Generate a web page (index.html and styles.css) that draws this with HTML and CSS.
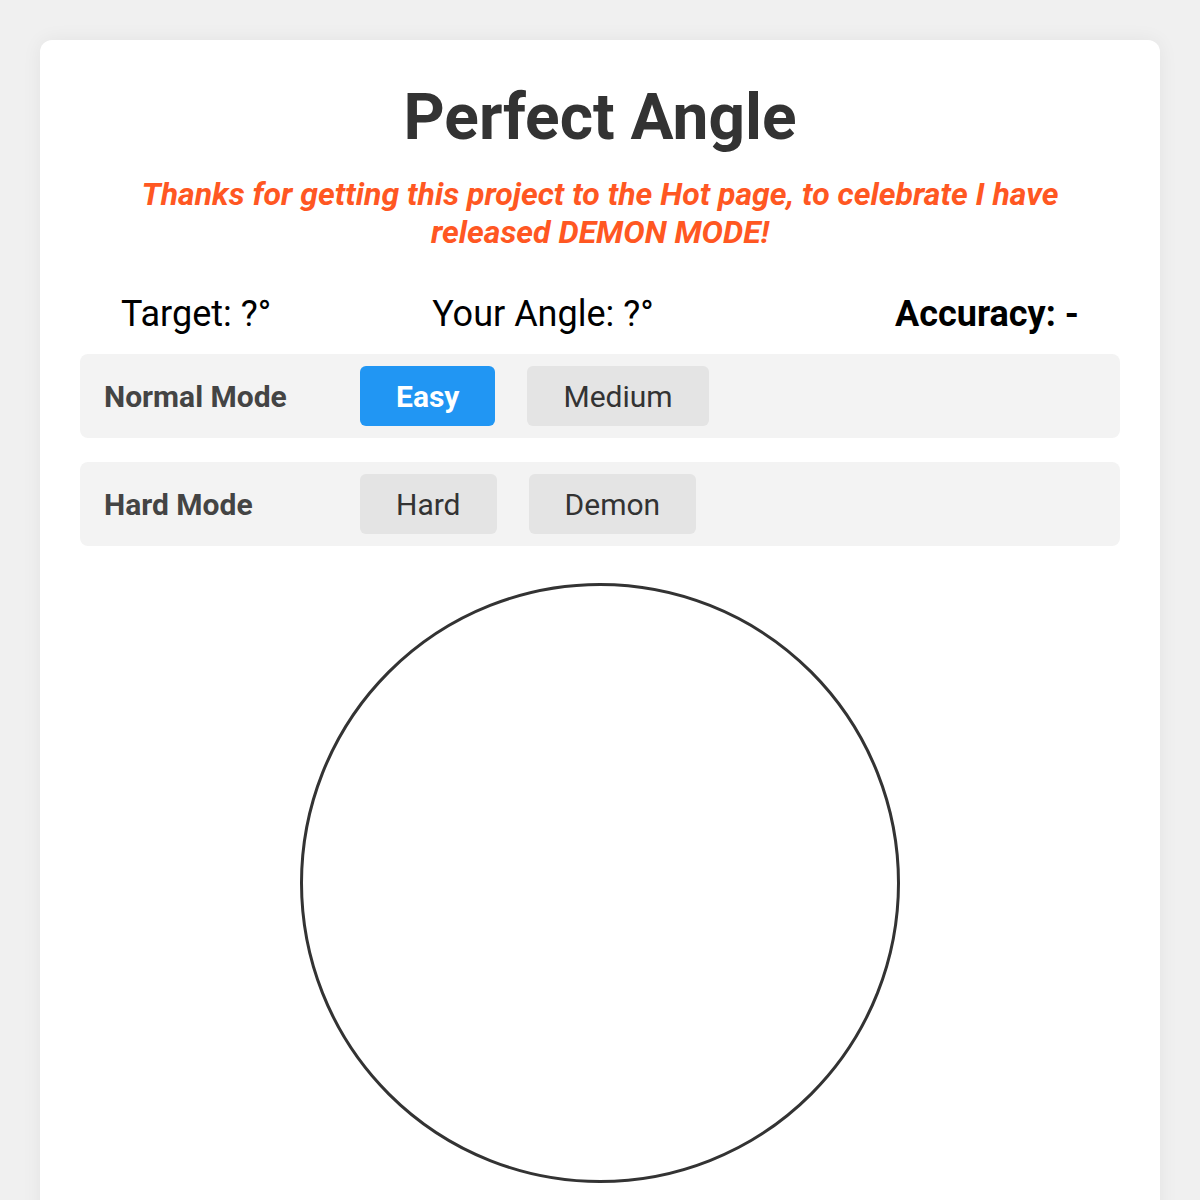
FILE: index.html
```html
<!doctype html>
<html>
<head>
<meta charset="utf-8">
<meta name="viewport" content="width=device-width">
<title>Perfect Angle</title>
<link rel="stylesheet" href="styles.css">
</head>
<body>

<div id="wrap">

<h1>Perfect Angle</h1>
<p class="notice">Thanks for getting this project to the Hot page, to celebrate I have released DEMON MODE!</p>

<div class="stats">
<div class="stat target">Target: <span id="target">?</span>°</div>
<div class="stat yours">Your Angle: <span id="angle">?</span>°</div>
<div class="stat accuracy">Accuracy: <span id="accuracy">-</span></div>
</div>

<div class="modes">
<span class="modelabel">Normal Mode</span>
<button class="mode active">Easy</button>
<button class="mode">Medium</button>
</div>

<div class="modes">
<span class="modelabel">Hard Mode</span>
<button class="mode">Hard</button>
<button class="mode">Demon</button>
</div>

<div class="dial"></div>

</div>

</body>
</html>
```

FILE: styles.css
```css
html, body {margin: 0; padding: 0;}
body {font-family: Roboto, "Liberation Sans", Arial, sans-serif; background-color: #f0f0f0; color: #333;}
#wrap {margin: 40px; padding: 40px; background-color: #fff; border-radius: 12px; box-shadow: 0 0 20px rgba(0,0,0,0.06); min-height: 1200px;}
h1 {font-size: 64px; font-weight: bold; text-align: center; margin: 0; line-height: 75px; color: #333;}
.notice {max-width: 960px; font-size: 32px; font-weight: bold; font-style: italic; color: #ff5722; text-align: center; margin: 20px auto 0; line-height: 38px;}
.stats {display: flex; align-items: center; padding: 0 41px; margin: 42px 0 19px; font-size: 36px; line-height: 42px; color: #000;}
.target {margin-right: 161px;}
.yours {margin-right: auto;}
.accuracy {font-weight: bold;}
.modes {display: flex; align-items: center; gap: 32px; background-color: #f3f3f3; border-radius: 8px; padding: 12px 24px; margin-bottom: 24px;}
.modelabel {width: 224px; font-size: 30px; font-weight: bold; color: #444;}
.mode {font-family: inherit; font-size: 30px; color: #333; background-color: #e4e4e4; border: 0; border-radius: 6px; padding: 0 36px; height: 60px; cursor: pointer;}
.mode.active {background-color: #2196f3; color: #fff; font-weight: bold;}
.dial {width: 600px; height: 600px; box-sizing: border-box; border: 3px solid #333; border-radius: 50%; margin: 37px auto 0; background-color: #fff;}
```
